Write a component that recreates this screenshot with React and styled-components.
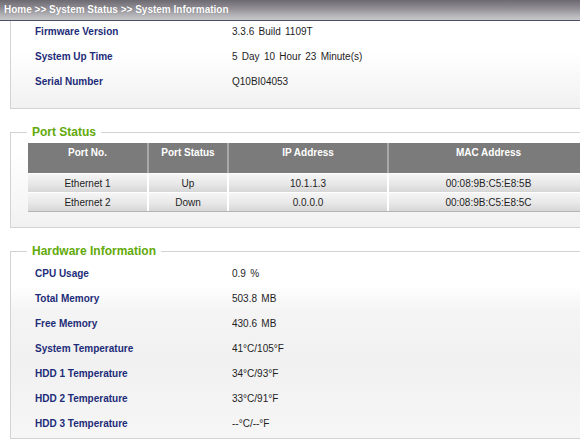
import React from "react";
import styled, { createGlobalStyle } from "styled-components";

const Global = createGlobalStyle`
  html, body { margin: 0; padding: 0; background: #fff; overflow: hidden; }
  body { font-family: "Liberation Sans", Arial, Helvetica, sans-serif; }
`;

const Page = styled.div`
  width: 580px;
  height: 439px;
  overflow: hidden;
`;

const Breadcrumb = styled.div`
  height: 20px;
  line-height: 19px;
  padding-left: 4px;
  border-bottom: 1px solid #4a5068;
  background: linear-gradient(to bottom, #6c6970 0%, #8e8c92 40%, #b3b2b6 75%, #c8c8cb 100%);
  color: #fff;
  font-size: 10px;
  font-weight: bold;
  white-space: nowrap;
  text-shadow: 0 0 1px rgba(0, 0, 0, 0.25);
`;

const Content = styled.div`
  width: 590px;
  padding-left: 10px;
  box-sizing: border-box;
`;

const InfoBox = styled.div`
  border-left: 1px solid #d3d3d3;
  border-bottom: 1px solid #d3d3d3;
  padding: 0 0 12px 24px;
  background: linear-gradient(to bottom, #ffffff 35%, #f1f1f1 100%);
`;

const InfoRow = styled.div`
  display: grid;
  grid-template-columns: 197px 1fr;
  height: 25px;
  padding-top: 4px;
  box-sizing: border-box;
  font-size: 10px;
  line-height: 13px;
  white-space: nowrap;
`;

const Label = styled.span`
  color: #1d2c78;
  font-weight: bold;
`;

const Value = styled.span`
  color: #1e1e1e;
  word-spacing: 1.5px;
`;

const Section = styled.fieldset`
  margin: ${(p) => p.$top}px 0 0 0;
  padding: ${(p) => p.$padTop}px 0 ${(p) => p.$padBottom}px 0;
  border: 1px solid #d3d3d3;
  border-right: none;
  min-width: 0;
  background: ${(p) => p.$bg};
`;

const Legend = styled.legend`
  margin-left: 16px;
  padding: 0 5px;
  font-size: 12px;
  line-height: 14px;
  font-weight: bold;
  color: #62aa0a;
`;

const SectionBody = styled.div`
  padding-left: ${(p) => p.$indent}px;
`;

const PortTable = styled.table`
  width: 560px;
  table-layout: fixed;
  border-collapse: separate;
  border-spacing: 0;
  font-size: 10px;
  border-bottom: 1px solid #b4b4b4;
`;

const HeadCell = styled.th`
  height: 30px;
  padding: 3px 0 0;
  box-sizing: border-box;
  vertical-align: top;
  background: #7b7b7b;
  color: #fff;
  font-weight: bold;
  line-height: 13px;
  border-left: ${(p) => (p.$first ? "none" : "2px solid #a9a9a9")};
`;

const Cell = styled.td`
  height: 19px;
  padding: 0;
  box-sizing: border-box;
  text-align: center;
  line-height: 17px;
  color: #1e1e1e;
  border-top: 1px solid #fff;
  border-left: ${(p) => (p.$first ? "none" : "2px solid #fff")};
  background: linear-gradient(to bottom, #f5f5f5 0%, #e8e8e8 55%, #d6d6d6 100%);
`;

const systemRows = [
  ["Firmware Version", "3.3.6 Build 1109T"],
  ["System Up Time", "5 Day 10 Hour 23 Minute(s)"],
  ["Serial Number", "Q10BI04053"],
];

const ports = [
  ["Ethernet 1", "Up", "10.1.1.3", "00:08:9B:C5:E8:5B"],
  ["Ethernet 2", "Down", "0.0.0.0", "00:08:9B:C5:E8:5C"],
];

const hardwareRows = [
  ["CPU Usage", "0.9 %"],
  ["Total Memory", "503.8 MB"],
  ["Free Memory", "430.6 MB"],
  ["System Temperature", "41°C/105°F"],
  ["HDD 1 Temperature", "34°C/93°F"],
  ["HDD 2 Temperature", "33°C/91°F"],
  ["HDD 3 Temperature", "--°C/--°F"],
];

export default function App() {
  return (
    <Page>
      <Global />
      <Breadcrumb>Home &gt;&gt; System Status &gt;&gt; System Information</Breadcrumb>
      <Content>
        <InfoBox>
          {systemRows.map(([l, v]) => (
            <InfoRow key={l}>
              <Label>{l}</Label>
              <Value>{v}</Value>
            </InfoRow>
          ))}
        </InfoBox>

        <Section
          $top={16}
          $padTop={4}
          $padBottom={15}
          $bg="linear-gradient(to bottom, #ffffff 20%, #f7f7f7 70%, #f1f1f1 100%)"
        >
          <Legend>Port Status</Legend>
          <SectionBody $indent={17}>
            <PortTable>
              <colgroup>
                <col style={{ width: 119 }} />
                <col style={{ width: 80 }} />
                <col style={{ width: 160 }} />
                <col style={{ width: 201 }} />
              </colgroup>
              <thead>
                <tr>
                  <HeadCell $first>Port No.</HeadCell>
                  <HeadCell>Port Status</HeadCell>
                  <HeadCell>IP Address</HeadCell>
                  <HeadCell>MAC Address</HeadCell>
                </tr>
              </thead>
              <tbody>
                {ports.map((r) => (
                  <tr key={r[0]}>
                    {r.map((c, i) => (
                      <Cell key={i} $first={i === 0}>
                        {c}
                      </Cell>
                    ))}
                  </tr>
                ))}
              </tbody>
            </PortTable>
          </SectionBody>
        </Section>

        <Section
          $top={16}
          $padTop={5}
          $padBottom={0}
          $bg="linear-gradient(to bottom, #ffffff 0%, #ffffff 18%, #f4f4f4 32%, #f1f1f1 60%, #f6f6f6 100%)"
        >
          <Legend>Hardware Information</Legend>
          <SectionBody $indent={24}>
            {hardwareRows.map(([l, v]) => (
              <InfoRow key={l}>
                <Label>{l}</Label>
                <Value>{v}</Value>
              </InfoRow>
            ))}
          </SectionBody>
        </Section>
      </Content>
    </Page>
  );
}
